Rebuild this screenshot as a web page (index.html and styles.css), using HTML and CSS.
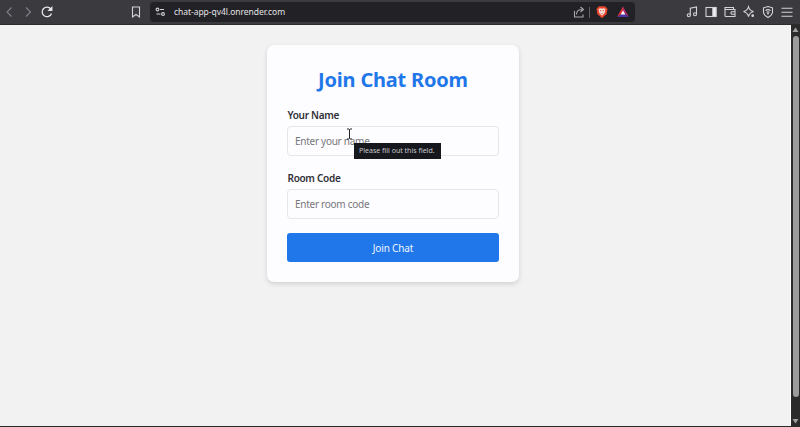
FILE: index.html
```html
<!DOCTYPE html>
<html lang="en">
<head>
<meta charset="utf-8">
<title>Join Chat Room</title>
<link rel="stylesheet" href="styles.css">
</head>
<body>
<header class="toolbar">
  <nav class="nav">
    <svg class="icon dim" viewBox="0 0 14 14"><path d="M9.500 2.500 5 7 9.500 11.500"/></svg>
    <svg class="icon dim" viewBox="0 0 14 14"><path d="M5 2.500 9.500 7 5 11.500"/></svg>
    <svg class="icon reload" viewBox="0 0 14 14"><path d="M11.500 8.500A4.800 4.800 0 1 1 10.800 4"/><path class="solid" d="M11.800 2.500v2.800H9z"/></svg>
  </nav>
  <svg class="icon bookmark" viewBox="0 0 14 14"><path d="M3.500 2h7v10L7 9.500 3.500 12z"/></svg>
  <div class="address">
    <svg class="icon tune" viewBox="0 0 14 14"><circle cx="4.500" cy="4.500" r="1.400"/><path d="M7 4.500h4M3.500 9h4"/><circle cx="10" cy="9" r="1.400"/></svg>
    <span class="url">chat-app-qv4l.onrender.com</span>
    <svg class="icon share" viewBox="0 0 14 14"><path d="M2.500 6v6h8.500V9.500M4.500 9.500c0-3.500 2-5 6-5M8.500 2l3 2.500-3 2.500"/></svg>
    <span class="divider"></span>
    <svg class="brand" viewBox="0 0 14 14"><path fill="#e8452c" d="M4 1.200h6l2.500 2.500-.8 5.300L7 13.200 2.300 9 1.500 3.700z"/><path fill="#f5ded7" d="m3.500 4 2-.7L7 3.700l1.500-.4 2 .7-.8 4L7 10.800 4.300 8z"/><path fill="#d64b32" d="m4.500 5 2 .5-.7 1zM9.500 5l-2 .5.700 1zM6 8h2L7 9z"/></svg>
    <svg class="brand bat" viewBox="0 0 14 14"><path fill="#e0343b" d="M7 1.500 1 12l6-4z"/><path fill="#a82d72" d="m7 1.500 6 10.500-6-4z"/><path fill="#4b35a2" d="M1 12h12L7 8z"/><path fill="#fff" d="M7 5.500 4.700 9.500h4.600z"/></svg>
  </div>
  <div class="tools">
    <svg class="icon" viewBox="0 0 14 14"><path d="M5.300 10.200V3.200l6.200-1.200v7"/><circle cx="3.800" cy="10.300" r="1.500"/><circle cx="10" cy="9.200" r="1.500"/></svg>
    <svg class="icon" viewBox="0 0 14 14"><rect x="2" y="2.500" width="10" height="9"/><path class="solid" d="M8.800 2.500H12v9H8.800z"/></svg>
    <svg class="icon" viewBox="0 0 14 14"><path d="M10.500 4.500V2.500H2v8q0 1 1 1h9v-7H2M12 6.800H8.500q-1.200 1.200 0 2.400H12"/></svg>
    <svg class="icon" viewBox="0 0 14 14"><path d="M6.500 1.800Q7.500 5.500 11.500 6.500 7.500 7.500 6.500 11.500 5.500 7.500 1.500 6.500 5.500 5.500 6.500 1.800z"/><circle class="solid" cx="10.700" cy="10.700" r=".8"/></svg>
    <svg class="icon" viewBox="0 0 14 14"><path d="m7 1.500 4.500 1.300v4.700Q11 10.500 7 12.500 3 10.500 2.500 7.500V2.800z"/><path d="M4.500 5.500q2.500-1.800 5 0M5.500 7.200q1.500-1 3 0"/><circle class="solid" cx="7" cy="8.500" r=".4"/></svg>
    <svg class="icon" viewBox="0 0 14 14"><path d="M1.500 3.200h11M1.500 7.200h11M1.500 11.200h11"/></svg>
  </div>
</header>
<div class="viewport">
  <main class="page">
    <form class="card">
      <h1 class="title">Join Chat Room</h1>
      <label class="label" for="name">Your Name</label>
      <div class="field">
        <input class="input" id="name" placeholder="Enter your name">
        <svg class="cursor" viewBox="0 0 7 12"><path d="M1 1h2l.5.500L4 1h2M3.500 1.500v9M1 11h2l.5-.5.500.500h2"/></svg>
        <span class="tooltip">Please fill out this field.</span>
      </div>
      <label class="label" for="room">Room Code</label>
      <div class="field"><input class="input" id="room" placeholder="Enter room code"></div>
      <button class="submit" type="button">Join Chat</button>
    </form>
  </main>
  <div class="scrollbar">
    <svg class="arrow" viewBox="0 0 9 9"><path d="M4.500 2.500 7.500 7h-6z"/></svg>
    <span class="thumb"></span>
    <svg class="arrow" viewBox="0 0 9 9"><path d="M1.500 2h6l-3 4.500z"/></svg>
  </div>
</div>
</body>
</html>
```
FILE: styles.css
```css
* { box-sizing: border-box; }
body {
  margin: 0;
  height: 427px;
  overflow: hidden;
  display: flex;
  flex-direction: column;
  font-family: "Noto Sans", "Open Sans", sans-serif;
  background: #f2f2f2;
}
.toolbar {
  height: 25px;
  flex: none;
  display: flex;
  align-items: center;
  background: #3b3a3f;
  border-bottom: 1px solid #2d2c30;
}
.icon {
  width: 14px;
  height: 14px;
  flex: none;
  fill: none;
  stroke: #d4d4d8;
  stroke-width: 1.1;
}
.icon .solid { fill: #f0f0f4; }
.dim { stroke: #828187; }
.reload { stroke: #e8e8ec; stroke-width: 1.3; }
.nav { display: flex; gap: 5px; padding-left: 2px; }
.bookmark { margin-left: 75px; }
.address {
  width: 485px;
  height: 20px;
  margin-left: 7px;
  display: flex;
  align-items: center;
  border-radius: 4px;
  background: #222126;
}
.tune { margin-left: 3px; }
.share { stroke: #a9a9ae; }
.url {
  margin-left: 7px;
  flex: 1;
  font-size: 8.500px;
  line-height: 20px;
  letter-spacing: -.04px;
  color: #e2e2e6;
  white-space: nowrap;
}
.divider { width: 1px; height: 11px; margin: 0 5px 0 3px; background: #626168; }
.brand { width: 14px; height: 14px; flex: none; }
.bat { margin: 0 5px 0 7px; }
.tools { display: flex; gap: 5px; margin-left: 50px; }
.viewport { flex: 1; display: flex; border-bottom: 1px solid #29282b; }
.page { flex: 1; padding: 20px 0 0 267px; border-right: 1px solid #fff; }
.card {
  width: 252px;
  height: 237px;
  padding: 20px;
  background: #fdfcff;
  border-radius: 7px;
  box-shadow: 0 2px 5px rgba(0, 0, 0, .14);
}
.title {
  margin: 0 0 11px;
  height: 30px;
  font-size: 20px;
  line-height: 30px;
  font-weight: 700;
  letter-spacing: -.2px;
  text-align: center;
  color: #1f77e9;
  white-space: nowrap;
}
.label {
  display: block;
  height: 20px;
  padding-left: .5px;
  font-size: 10px;
  line-height: 18px;
  font-weight: 600;
  letter-spacing: -.3px;
  color: #303136;
}
.field { position: relative; height: 30px; margin-bottom: 14px; }
.field + .label { margin-top: -1px; }
.input {
  display: block;
  width: 212px;
  height: 30px;
  padding: 0 7px;
  border: 1px solid #e6e6e8;
  border-radius: 4px;
  background: transparent;
  font: 10px "Noto Sans", sans-serif;
  letter-spacing: -.27px;
}
.input::placeholder { color: #77777a; opacity: 1; }
.cursor {
  position: absolute;
  left: 59px;
  top: 2px;
  width: 7px;
  height: 12px;
  fill: none;
  stroke: #252528;
}
.tooltip {
  position: absolute;
  left: 67px;
  top: 17px;
  width: 87px;
  height: 16px;
  padding-left: 5px;
  background: #17181d;
  color: #c9c9ce;
  font-size: 7px;
  line-height: 16px;
  white-space: nowrap;
}
.submit {
  display: block;
  width: 212px;
  height: 29px;
  padding: 0;
  border: 0;
  border-radius: 3px;
  background: #2077e9;
  color: #edf5ff;
  font: 10px "Noto Sans", sans-serif;
  letter-spacing: -.15px;
}
.scrollbar {
  width: 9px;
  display: flex;
  flex-direction: column;
  background: #2b2b2b;
}
.arrow { width: 9px; height: 9px; flex: none; fill: #a0a0a0; }
.thumb { width: 6px; height: 361px; margin: 2px 0 auto 2px; border-radius: 3px; background: #9c9c9c; }
```
